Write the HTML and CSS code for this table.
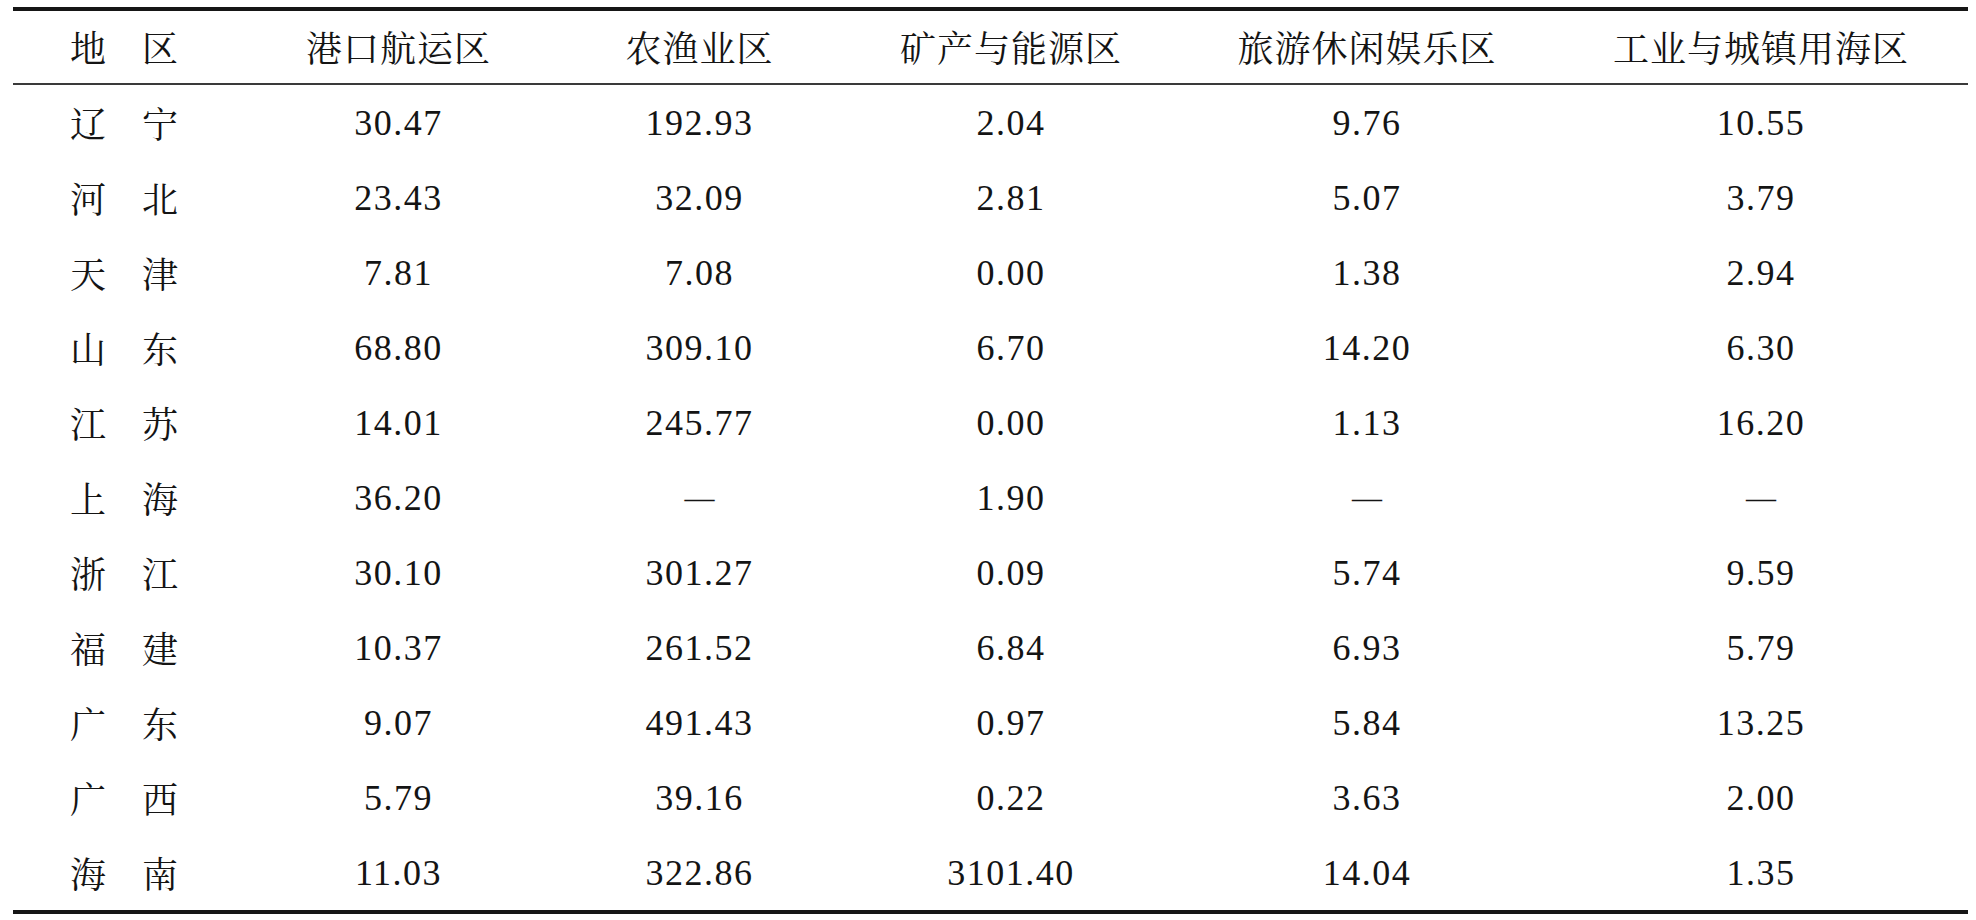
FILE: index.html
```html
<!DOCTYPE html>
<html lang="zh-CN">
<head>
<meta charset="utf-8">
<title>各地区海洋功能区面积</title>
<link rel="stylesheet" href="styles.css">
</head>
<body>
<div class="page">
<table class="data">
  <colgroup>
    <col class="c-region"><col class="c-port"><col class="c-fish"><col class="c-mine"><col class="c-tour"><col class="c-ind">
  </colgroup>
  <thead>
    <tr>
      <th class="region">地　区</th>
      <th>港口航运区</th>
      <th>农渔业区</th>
      <th>矿产与能源区</th>
      <th>旅游休闲娱乐区</th>
      <th>工业与城镇用海区</th>
    </tr>
  </thead>
  <tbody>
    <tr><td class="region">辽　宁</td><td>30.47</td><td>192.93</td><td>2.04</td><td>9.76</td><td>10.55</td></tr>
    <tr><td class="region">河　北</td><td>23.43</td><td>32.09</td><td>2.81</td><td>5.07</td><td>3.79</td></tr>
    <tr><td class="region">天　津</td><td>7.81</td><td>7.08</td><td>0.00</td><td>1.38</td><td>2.94</td></tr>
    <tr><td class="region">山　东</td><td>68.80</td><td>309.10</td><td>6.70</td><td>14.20</td><td>6.30</td></tr>
    <tr><td class="region">江　苏</td><td>14.01</td><td>245.77</td><td>0.00</td><td>1.13</td><td>16.20</td></tr>
    <tr><td class="region">上　海</td><td>36.20</td><td class="dash">—</td><td>1.90</td><td class="dash">—</td><td class="dash">—</td></tr>
    <tr><td class="region">浙　江</td><td>30.10</td><td>301.27</td><td>0.09</td><td>5.74</td><td>9.59</td></tr>
    <tr><td class="region">福　建</td><td>10.37</td><td>261.52</td><td>6.84</td><td>6.93</td><td>5.79</td></tr>
    <tr><td class="region">广　东</td><td>9.07</td><td>491.43</td><td>0.97</td><td>5.84</td><td>13.25</td></tr>
    <tr><td class="region">广　西</td><td>5.79</td><td>39.16</td><td>0.22</td><td>3.63</td><td>2.00</td></tr>
    <tr><td class="region">海　南</td><td>11.03</td><td>322.86</td><td>3101.40</td><td>14.04</td><td>1.35</td></tr>
  </tbody>
</table>
</div>
</body>
</html>
```

FILE: styles.css
```css
html, body {
  margin: 0;
  padding: 0;
  background: #ffffff;
}

.page {
  padding: 7px 0 0 13px;
}

.data {
  border-collapse: collapse;
  table-layout: fixed;
  width: 1955px;
  color: #141414;
  font-family: "Liberation Serif", "Noto Serif CJK SC", "Noto Sans CJK SC", serif;
  font-size: 36px;
  line-height: 1;
  border-top: 4px solid #161616;
  border-bottom: 4px solid #161616;
}

.c-region { width: 227px; }
.c-port { width: 317px; }
.c-fish { width: 285px; }
.c-mine { width: 338px; }
.c-tour { width: 374px; }
.c-ind { width: 414px; }

.data th,
.data td {
  padding: 0;
  text-align: center;
  vertical-align: middle;
  white-space: nowrap;
}

.data th {
  height: 72px;
  font-weight: normal;
  font-family: "Noto Serif CJK SC", "Noto Sans CJK SC", serif;
  letter-spacing: 1px;
  border-bottom: 2px solid #3a3a3a;
}

.data td {
  height: 75px;
  letter-spacing: 1.5px;
}

.data .region {
  text-align: left;
  padding-left: 57px;
  letter-spacing: 0;
  font-family: "Noto Serif CJK SC", "Noto Sans CJK SC", serif;
}

.data .dash {
  letter-spacing: 0;
  font-size: 30px;
}
```
